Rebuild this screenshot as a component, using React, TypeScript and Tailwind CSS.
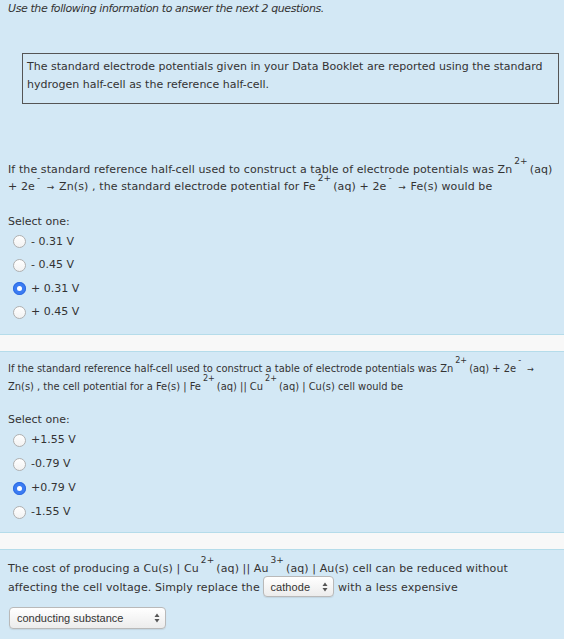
import React from 'react';

const verdana = "font-['DejaVu_Sans',Verdana,sans-serif]";
const tahoma = "font-['DejaVu_Sans_Condensed','DejaVu_Sans',Tahoma,sans-serif] font-stretch-condensed";

function Sup({ children }: { children: React.ReactNode }) {
  return (
    <sup className="relative top-[-0.95em] mx-[2px] text-[9px] leading-none align-baseline">
      {children}
    </sup>
  );
}

function Arrow() {
  return <span className="text-[9px] mx-[1px]">→</span>;
}

function Radio({ checked }: { checked?: boolean }) {
  if (checked) {
    return (
      <span className="flex h-[13px] w-[13px] items-center justify-center rounded-full bg-[#3b7cf3] shadow-[inset_0_0_0_1px_#2f6be0]">
        <span className="h-[5px] w-[5px] rounded-full bg-white" />
      </span>
    );
  }
  return (
    <span className="h-[13px] w-[13px] rounded-full border border-[#b0b0b0] bg-gradient-to-b from-white to-[#f2f2f2]" />
  );
}

function Option({ label, checked, h }: { label: string; checked?: boolean; h: string }) {
  return (
    <div className={`flex items-center pl-[13px] ${h}`}>
      <Radio checked={checked} />
      <span className="ml-[5px]">{label}</span>
    </div>
  );
}

function Updown() {
  return (
    <svg width="6" height="10" viewBox="0 0 6 10" className="shrink-0">
      <path d="M3 0.5 L5.5 4 L0.5 4 Z" fill="#555" />
      <path d="M3 9.5 L5.5 6 L0.5 6 Z" fill="#555" />
    </svg>
  );
}

function FakeSelect({ label, w }: { label: string; w: string }) {
  return (
    <span
      className={`inline-flex items-center justify-between rounded-[4px] border border-[#b9b9b9] bg-gradient-to-b from-white to-[#ececec] pl-[6px] pr-[5px] align-middle font-['Liberation_Sans',Arial,sans-serif] text-[11px] text-[#333] shadow-[0_1px_1px_rgba(0,0,0,0.08)] ${w}`}
    >
      <span>{label}</span>
      <Updown />
    </span>
  );
}

function Band() {
  return <div className="h-[18px] bg-[#f8f8f8] border-y border-[#b5dcea]" />;
}

export default function App() {
  return (
    <div className={`min-h-screen bg-[#d3e8f5] text-[11px] text-[#333] ${verdana}`}>
      {/* info + question 1 */}
      <section className="px-[8px] pb-[10px]">
        <p className="italic leading-[17px] tracking-[-0.4px]">Use the following information to answer the next 2 questions.</p>
        <div className="mt-[36px] ml-[14px] mr-[-3px] border border-[#555] px-[4px] pt-[4px] pb-[9px] leading-[18px]">
          The standard electrode potentials given in your Data Booklet are reported using the standard hydrogen
          half-cell as the reference half-cell.
        </div>
        <p className="mt-[57px] leading-[17px] tracking-[0.1px]">
          If the standard reference half-cell used to construct a table of electrode potentials was Zn
          <Sup>2+</Sup>(aq)
          <br />+ 2e<Sup>-</Sup> <Arrow /> Zn(s) , the standard electrode potential for Fe<Sup>2+</Sup>(aq) + 2e
          <Sup>-</Sup> <Arrow /> Fe(s) would be
        </p>
        <p className="mt-[17px] leading-[17px]">Select one:</p>
        <div className="-mx-[8px]">
          <Option label="- 0.31 V" h="h-[23.5px]" />
          <Option label="- 0.45 V" h="h-[23.5px]" />
          <Option label="+ 0.31 V" h="h-[23.5px]" checked />
          <Option label="+ 0.45 V" h="h-[23.5px]" />
        </div>
      </section>

      <Band />

      {/* question 2 */}
      <section className={`px-[8px] pt-[8px] pb-[8px] ${tahoma}`}>
        <p className="leading-[17px]">
          If the standard reference half-cell used to construct a table of electrode potentials was Zn<Sup>2+</Sup>
          (aq) + 2e<Sup>-</Sup> <Arrow />
          <br />
          Zn(s) , the cell potential for a Fe(s) | Fe<Sup>2+</Sup>(aq) || Cu<Sup>2+</Sup>(aq) | Cu(s) cell would be
        </p>
        <p className={`mt-[16px] leading-[17px] ${verdana} font-stretch-normal`}>Select one:</p>
        <div className={`-mx-[8px] ${verdana} font-stretch-normal`}>
          <Option label="+1.55 V" h="h-6" />
          <Option label="-0.79 V" h="h-6" />
          <Option label="+0.79 V" h="h-6" checked />
          <Option label="-1.55 V" h="h-6" />
        </div>
      </section>

      <Band />

      {/* question 3 */}
      <section className="px-[8px] pt-[10px] pb-[12px]">
        <p className="leading-[18px] tracking-[0.1px]">
          The cost of producing a Cu(s) | Cu<Sup>2+</Sup>(aq) || Au<Sup>3+</Sup>(aq) | Au(s) cell can be reduced
          without
          <br />
          affecting the cell voltage. Simply replace the{' '}
          <FakeSelect label="cathode" w="w-[71px] h-[21px] mt-[-2px]" /> with a less expensive
        </p>
        <div className="mt-[10px] ml-px">
          <FakeSelect label="conducting substance" w="w-[157px] h-[22px] pl-[7px]" />
        </div>
      </section>
    </div>
  );
}
